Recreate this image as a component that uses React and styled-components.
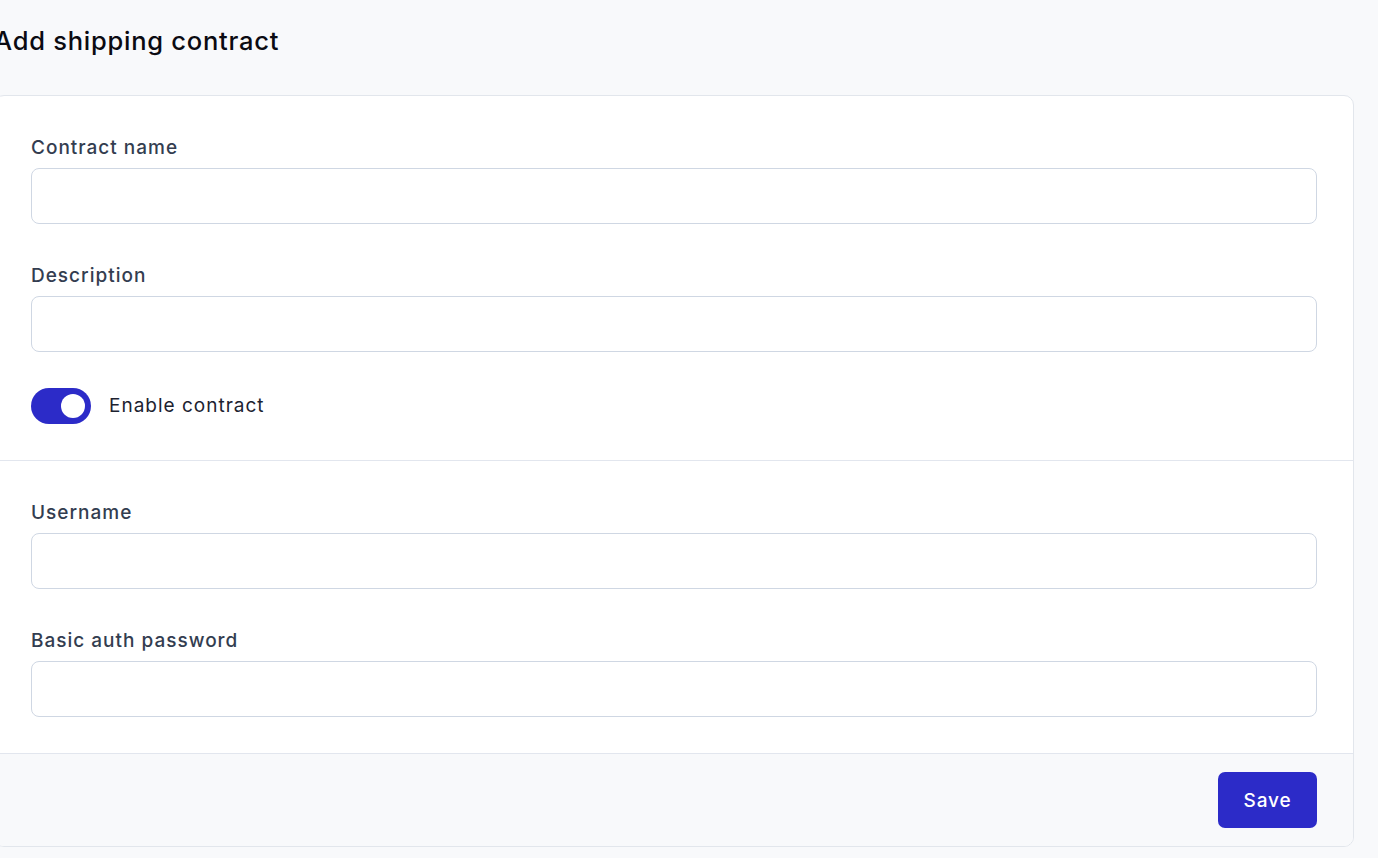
import React, { useState } from 'react';
import styled, { createGlobalStyle } from 'styled-components';

const GlobalStyle = createGlobalStyle`
  html, body {
    margin: 0;
    padding: 0;
    background: #f8f9fb;
    font-family: Inter, 'Liberation Sans', sans-serif;
    overflow: hidden;
  }
`;

const Page = styled.div`
  margin-left: -6px;
  padding: 26px 24px 12px 0;
`;

const Title = styled.h1`
  margin: 0 0 39px 0;
  font-size: 25.5px;
  line-height: 30px;
  font-weight: 500;
  color: #0b0b12;
  letter-spacing: 0.75px;
`;

const Card = styled.div`
  background: #fff;
  border: 1px solid #e2e6ec;
  border-radius: 10px;
  overflow: hidden;
`;

const Section = styled.div`
  padding: 38px 36px 36px 36px;
  display: flex;
  flex-direction: column;
  gap: 38px;
  & + & {
    border-top: 1px solid #e2e6ee;
  }
`;

const Field = styled.div`
  display: flex;
  flex-direction: column;
`;

const Label = styled.label`
  font-size: 19px;
  line-height: 24px;
  font-weight: 500;
  color: #333d50;
  letter-spacing: 1px;
  padding-top: 2px;
  margin-bottom: 8px;
`;

const Input = styled.input`
  box-sizing: border-box;
  height: 56px;
  width: 100%;
  border: 1px solid #cfd7e3;
  border-radius: 8px;
  padding: 0 16px;
  font-size: 18px;
  font-family: inherit;
  outline: none;
  background: #fff;
`;

const ToggleRow = styled.div`
  display: flex;
  align-items: center;
  gap: 18px;
  margin-top: -2px;
`;

const Switch = styled.button`
  position: relative;
  width: 60px;
  height: 36px;
  border: none;
  padding: 0;
  border-radius: 18px;
  background: ${p => (p.on ? '#2c2bc8' : '#cbd2dc')};
  cursor: pointer;
  &::after {
    content: '';
    position: absolute;
    top: 6px;
    left: ${p => (p.on ? '30px' : '6px')};
    width: 24px;
    height: 24px;
    border-radius: 50%;
    background: #fff;
  }
`;

const ToggleText = styled.span`
  font-size: 19px;
  line-height: 24px;
  color: #1c2230;
  letter-spacing: 1px;
`;

const Footer = styled.div`
  border-top: 1px solid #e2e6ee;
  background: #f8f9fb;
  padding: 18px 36px 18px 36px;
  display: flex;
  justify-content: flex-end;
`;

const SaveButton = styled.button`
  height: 56px;
  width: 99px;
  border: none;
  border-radius: 7px;
  background: #2c2bc8;
  color: #fff;
  font-family: inherit;
  font-size: 19px;
  font-weight: 500;
  letter-spacing: 0.9px;
  cursor: pointer;
`;

function FormField({ label, type = 'text' }) {
  return (
    <Field>
      <Label>{label}</Label>
      <Input type={type} />
    </Field>
  );
}

export default function App() {
  const [enabled, setEnabled] = useState(true);
  return (
    <>
      <GlobalStyle />
      <Page>
        <Title>Add shipping contract</Title>
        <Card>
          <Section>
            <FormField label="Contract name" />
            <FormField label="Description" />
            <ToggleRow>
              <Switch on={enabled ? 1 : 0} onClick={() => setEnabled(!enabled)} />
              <ToggleText>Enable contract</ToggleText>
            </ToggleRow>
          </Section>
          <Section>
            <FormField label="Username" />
            <FormField label="Basic auth password" type="password" />
          </Section>
          <Footer>
            <SaveButton>Save</SaveButton>
          </Footer>
        </Card>
      </Page>
    </>
  );
}
